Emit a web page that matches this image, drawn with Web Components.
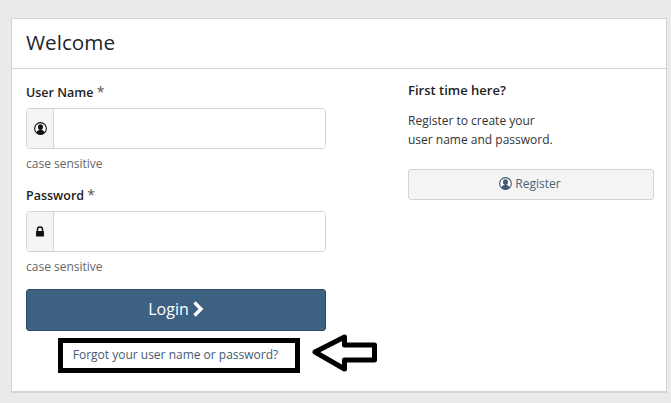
<!DOCTYPE html>
<html lang="en">
<head>
<meta charset="utf-8">
<title>Welcome</title>
<style>
html,body{margin:0;padding:0;height:403px;overflow:hidden;background:#e9eaec;}
body{font-family:"Open Sans","Liberation Sans",sans-serif;color:#222;}
</style>
</head>
<body>
<script>
const tpl=(html)=>{const t=document.createElement('template');t.innerHTML=html;return t;};
function def(name,html){
  const t=tpl(html);
  customElements.define(name,class extends HTMLElement{
    constructor(){super();this.attachShadow({mode:'open'}).appendChild(t.content.cloneNode(true));}
  });
}
def('user-icon',`<style>:host{display:inline-block;line-height:0}svg{display:block}</style>
<svg viewBox="0 0 14 14" width="100%" height="100%">
<circle cx="7" cy="7" r="6.300" fill="#fff" stroke="currentColor" stroke-width="1.200"/>
<ellipse cx="7" cy="5.500" rx="2.700" ry="3.100" fill="currentColor"/>
<path d="M2.600 11.200c.7-2 2.300-2.900 4.400-2.900s3.700.9 4.400 2.900C10.200 12.700 8.700 13.400 7 13.400s-3.200-.7-4.400-2.200z" fill="currentColor"/>
</svg>`);
def('lock-icon',`<style>:host{display:inline-block;line-height:0}svg{display:block}</style>
<svg viewBox="0 0 10 11" width="100%" height="100%"><path d="M2.500 5V3.400a2.500 2.500 0 0 1 5 0V5" fill="none" stroke="currentColor" stroke-width="1.500"/><rect x="1" y="5" width="8" height="5.500" rx=".7" fill="currentColor"/></svg>`);
def('field-group',`<style>
:host{display:block;font-family:"Open Sans","Liberation Sans",sans-serif}
.label{display:block;height:30px;line-height:27px;font-size:12.500px;font-weight:600;color:#222}
.req{font-weight:400;font-size:14px;color:#6b4f4f}
.group{display:flex;height:41px;box-sizing:border-box;border:1px solid #d4d4d4;border-radius:4px;background:#fff;overflow:hidden}
.addon{width:26px;flex:none;display:flex;align-items:center;justify-content:center;background:#f4f4f4;border-right:1px solid #d4d4d4;color:#111}
.input{flex:1;min-width:0;border:0;background:#fff;padding:0;outline:0}
.help{display:block;height:32px;line-height:29px;font-size:12px;color:#666}
</style>
<span class="label"><slot name="label"></slot> <span class="req">*</span></span>
<div class="group"><div class="addon"><slot name="icon"></slot></div><input class="input" aria-label="field"></div>
<span class="help">case sensitive</span>`);
def('primary-button',`<style>
:host{display:block}
button{display:flex;align-items:center;justify-content:center;gap:3px;width:100%;height:42px;margin:0;padding:0 0 2px;box-sizing:border-box;background:#3d6180;border:1px solid #2f4d68;border-radius:3px;color:#fff;font:400 16px "Open Sans","Liberation Sans",sans-serif}
svg{display:block}
</style>
<button><slot></slot><svg width="12" height="16" viewBox="0 0 12 16"><path d="M2.500 1.500 9 8l-6.500 6.500" fill="none" stroke="#fff" stroke-width="3.400"/></svg></button>`);
def('secondary-button',`<style>
:host{display:block}
button{display:flex;align-items:center;justify-content:center;gap:3px;width:100%;height:31px;margin:0;padding:0 2px 2px 0;box-sizing:border-box;background:#f4f4f4;border:1px solid #d4d4d4;border-radius:3px;color:#4d6275;font:400 12px "Open Sans","Liberation Sans",sans-serif}
user-icon{width:13px;height:13px;color:#3f5a72}
</style>
<button><user-icon></user-icon><slot></slot></button>`);
def('login-form',`<style>
:host{display:block;width:300px}
primary-button{margin-top:5px}
.forgot{display:block;text-align:center;margin-top:15px;height:18px;line-height:18px;font-size:12px;color:#3f5a72;text-decoration:none;padding-right:1px}
</style>
<field-group><span slot="label">User Name</span><user-icon slot="icon" style="width:13px;height:13px"></user-icon></field-group>
<field-group><span slot="label">Password</span><lock-icon slot="icon" style="width:10px;height:11px"></lock-icon></field-group>
<primary-button>Login</primary-button>
<a class="forgot" href="#">Forgot your user name or password?</a>`);
def('register-panel',`<style>
:host{display:block;width:246px;font-size:12px;color:#333}
h2{margin:0;height:26px;line-height:24px;font-size:13px;font-weight:600;color:#222}
p{margin:7px 0 20px;line-height:19px}
</style>
<h2>First time here?</h2>
<p>Register to create your<br>user name and password.</p>
<secondary-button>Register</secondary-button>`);
def('annotation-arrow',`<style>
:host{position:absolute;left:0;top:0;width:0;height:0;pointer-events:none}
.box{position:absolute;left:58px;top:338px;width:242px;height:35px;box-sizing:border-box;border:5px solid #000}
svg{position:absolute;left:308px;top:330px}
</style>
<div class="box"></div>
<svg width="74" height="46" viewBox="0 0 74 46"><path d="M7 22 36.500 7v8h30v15h-30v9z" fill="#fff" stroke="#000" stroke-width="5" stroke-linejoin="round"/></svg>`);
def('welcome-card',`<style>
:host{display:block;box-sizing:border-box;height:375px;background:#fff;border:1px solid #d4d5d7;border-bottom:2px solid #d4d5d7;font-family:"Open Sans","Liberation Sans",sans-serif}
header{height:50px;box-sizing:border-box;border-bottom:1px solid #d4d4d4;padding-left:14px;line-height:46px;font-size:20.700px;color:#1c2530}
.cols{display:flex;padding:9px 12px 0 14px;justify-content:space-between}
</style>
<header>Welcome</header>
<div class="cols"><login-form></login-form><register-panel></register-panel></div>`);
def('login-page',`<style>:host{display:block;padding:18px 4px 0 11px}</style><slot></slot>`);
</script>
<login-page><welcome-card></welcome-card></login-page>
<annotation-arrow></annotation-arrow>
</body>
</html>
